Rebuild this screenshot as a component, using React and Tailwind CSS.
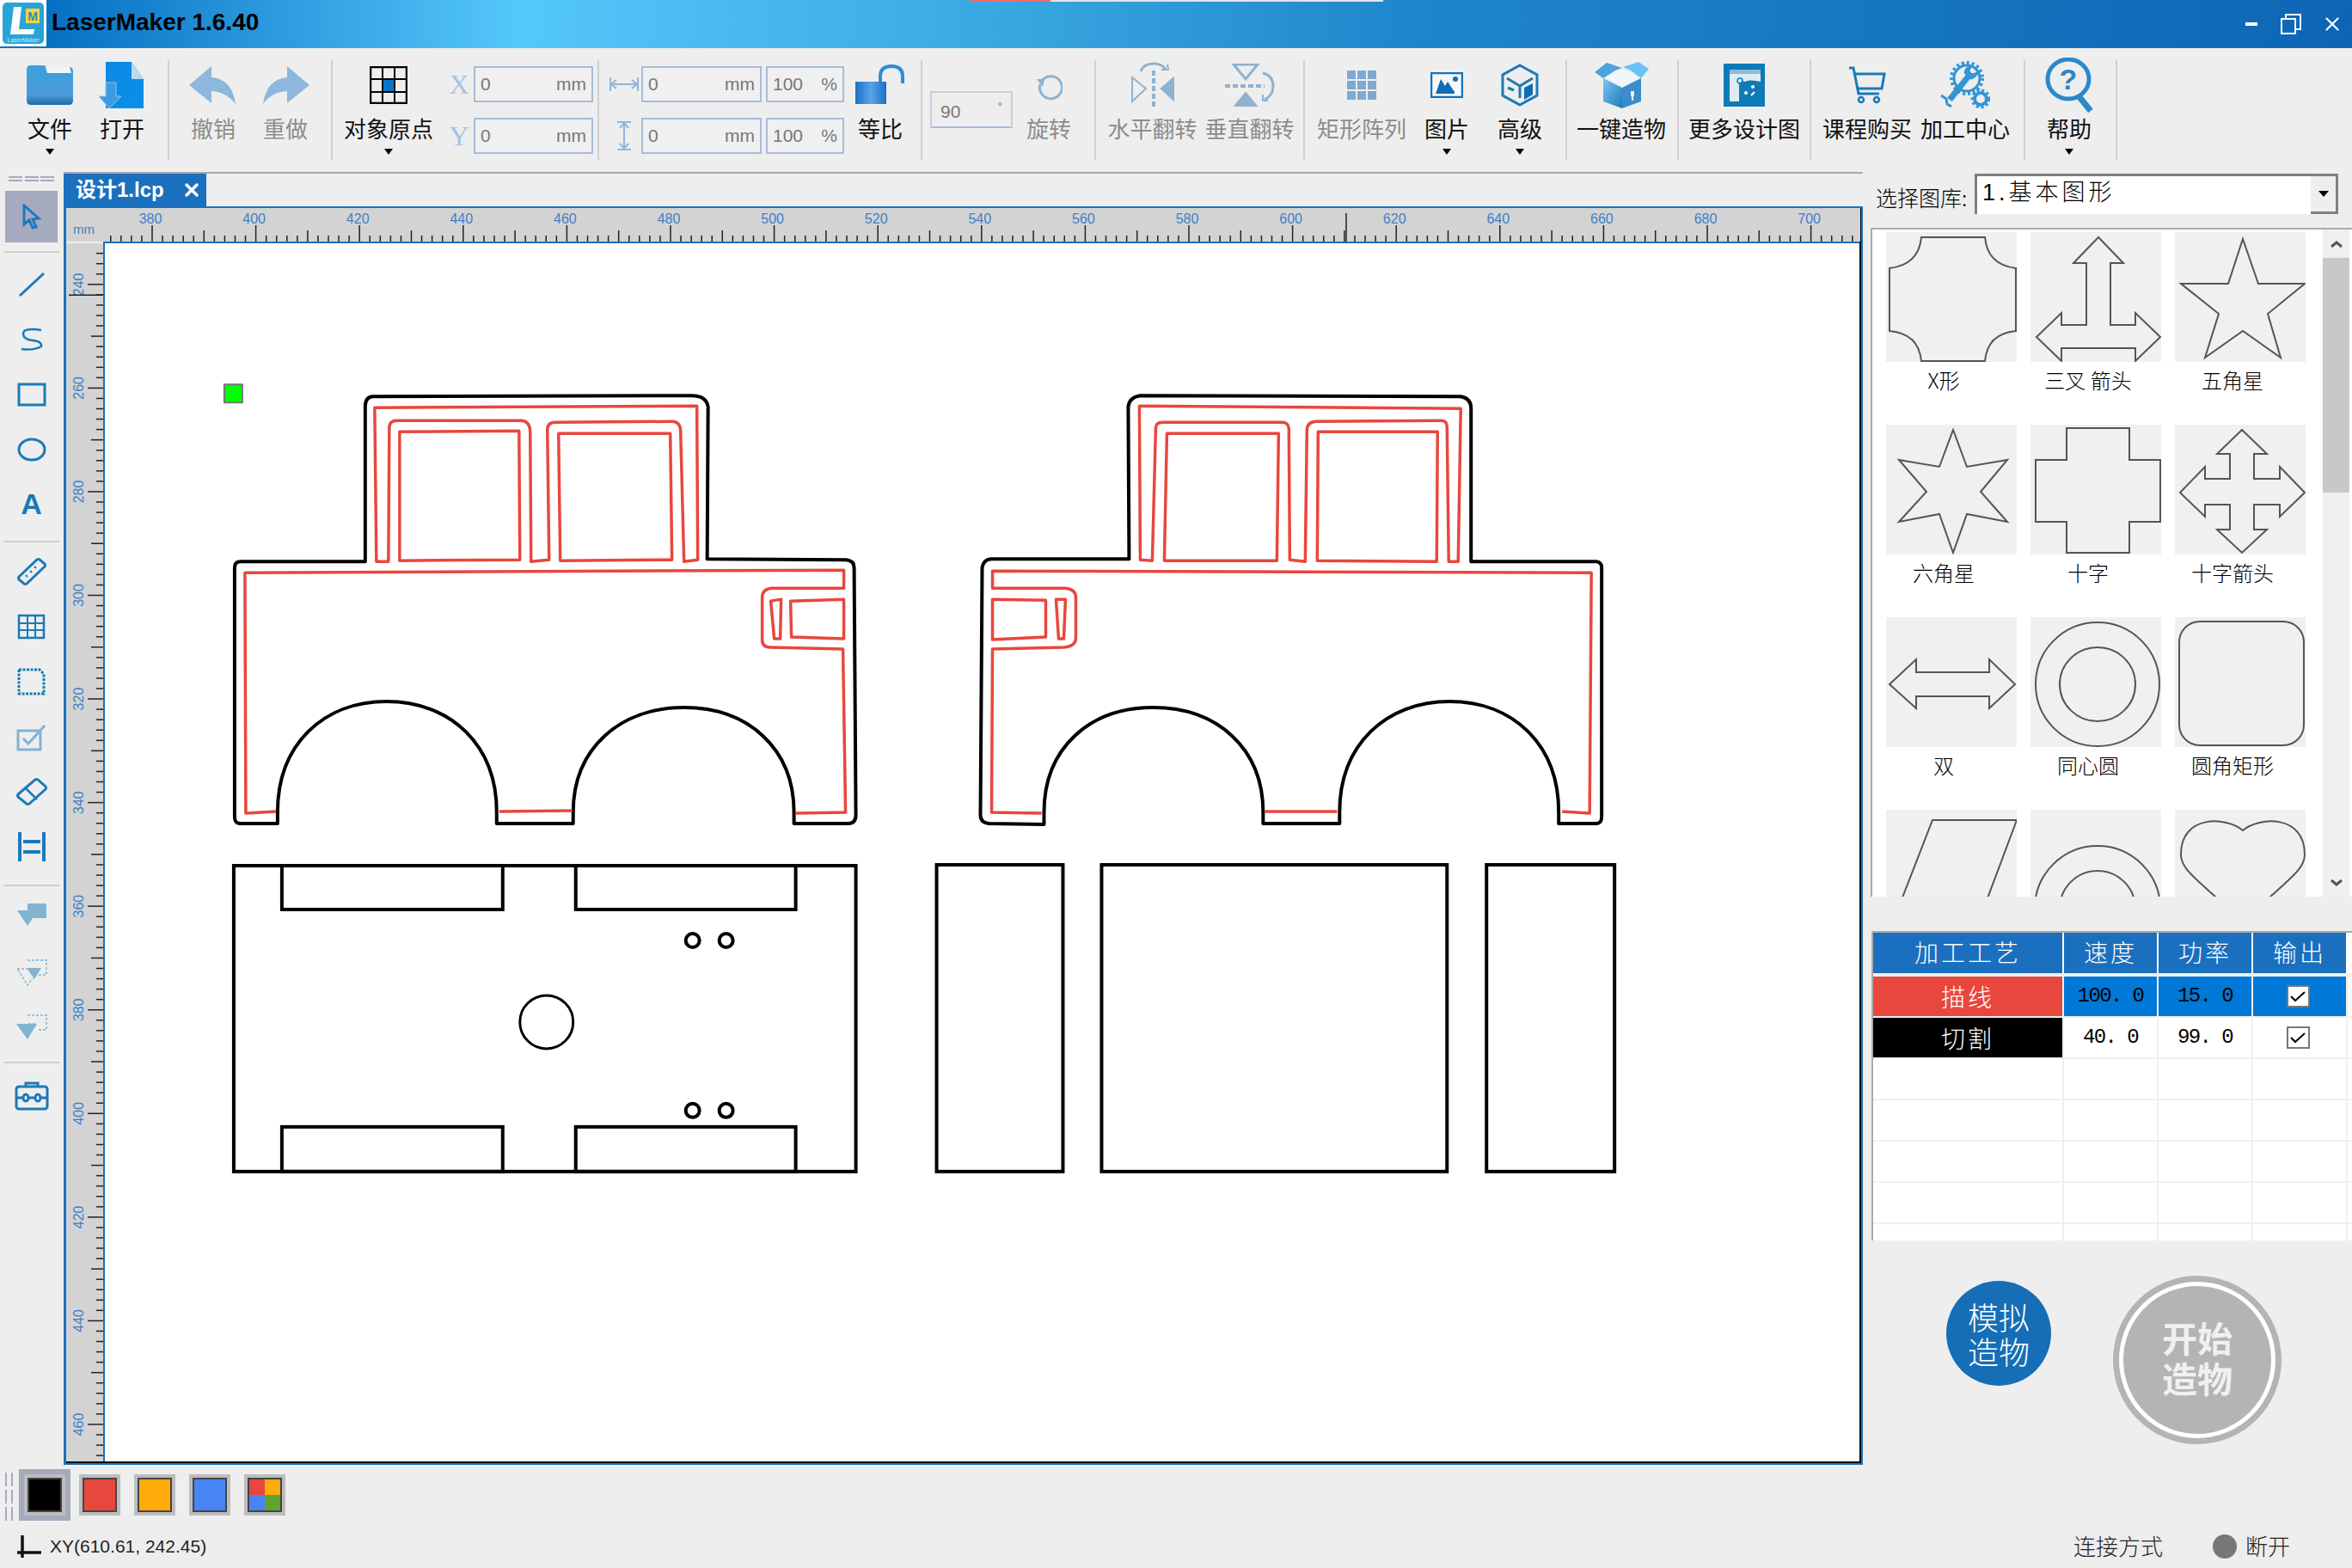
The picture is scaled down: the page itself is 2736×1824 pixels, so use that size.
import { X } from "lucide-react";

const BLUE = "#1a7ab8";
const RULER_BLUE = "#3d80c8";

function Logo() {
    return (
        <div className="w-[54px] h-[54px] bg-white p-[2px]">
            <svg viewBox="0 0 50 50" className="w-[50px] h-[50px]">
                <rect x="1" y="1" width="48" height="48" rx="5" fill="#2aa4d8" />
                <path d="M14 6h9l-3 26h18l-1 6H10z" fill="#fff" />
                <rect x="28" y="8" width="16" height="17" fill="#f3d53f" />
                <text x="36" y="22" fontSize="14" fontWeight="700" textAnchor="middle" fill="#2a8bc0" fontFamily="Liberation Sans">M</text>
                <text x="25" y="47" fontSize="7" textAnchor="middle" fill="#cfeefa" fontFamily="Liberation Sans">LaserMaker</text>
            </svg>
        </div>
    );
}

function TitleBar() {
    return (
        <div className="relative flex items-center h-[56px] bg-[linear-gradient(90deg,#0670c3_2%,#54c7fb_22%,#3eaee6_39%,#1f86cb_60%,#0d66b5_100%)]">
            <div className="self-start"><Logo /></div>
            <div className="ml-[6px] pb-[4px] text-[28px] font-bold text-black font-['Liberation_Sans',sans-serif]">LaserMaker 1.6.40</div>
            <div className="absolute left-[1127px] top-0 flex h-[2px]">
                <div className="w-[95px] bg-[#f06a6a]" />
                <div className="w-[387px] bg-[#e4e4e4]" />
            </div>
            <div className="ml-auto flex items-center text-white">
                <div className="w-[14px] h-[4px] bg-white mr-[26px]" />
                <svg viewBox="0 0 26 26" className="w-[26px] h-[26px] mr-[22px]" fill="none" stroke="#fff" strokeWidth="2">
                    <rect x="2" y="7" width="16" height="17" />
                    <path d="M7 7V2h17v17h-6" />
                </svg>
                <X size={26} strokeWidth={2} className="mr-[10px]" />
            </div>
        </div>
    );
}

function Sep({ className = "" }) {
    return <div className={`w-[2px] h-[116px] mt-[14px] bg-[#d0d0d0] shrink-0 ${className}`} />;
}

function Tool({ label, w, icon, arrow, muted }) {
    return (
        <div style={{ width: w }} className="shrink-0 flex flex-col items-center pt-[16px]">
            <div className="h-[54px] flex items-center justify-center">{icon}</div>
            <div className={`mt-[8px] h-[30px] leading-[30px] whitespace-nowrap text-[26px] ${muted ? "text-[#8c8c8c]" : "text-[#111]"}`}>{label}</div>
            {arrow && <div className="mt-[9px] w-0 h-0 border-x-[5px] border-x-transparent border-t-[7px] border-t-black" />}
        </div>
    );
}

function Field({ value, unit, w }) {
    return (
        <div style={{ width: w }} className="h-[42px] flex items-center justify-between px-[6px] border-2 border-[#a8bcd8] bg-[#f0f0f0] text-[21px] text-[#777] font-['Liberation_Sans',sans-serif]">
            <span>{value}</span><span>{unit}</span>
        </div>
    );
}

function Defs() {
    return (
        <svg width="0" height="0" className="absolute">
            <defs>
                <linearGradient id="gFolder" x1="0" y1="0" x2="0" y2="1">
                    <stop offset="0" stopColor="#3d9fe0" /><stop offset="0.75" stopColor="#4a9ad6" /><stop offset="1" stopColor="#1e6da8" />
                </linearGradient>
                <linearGradient id="gDoc" x1="0" y1="0" x2="0" y2="1">
                    <stop offset="0" stopColor="#0a8ae6" /><stop offset="1" stopColor="#0a8fe8" />
                </linearGradient>
                <linearGradient id="gLock" x1="0" y1="0" x2="1" y2="0">
                    <stop offset="0" stopColor="#1c70c8" /><stop offset="0.5" stopColor="#5aa3e6" /><stop offset="1" stopColor="#1c70c8" />
                </linearGradient>
                <linearGradient id="gBox" x1="0" y1="0" x2="1" y2="1">
                    <stop offset="0" stopColor="#7cc8f2" /><stop offset="1" stopColor="#1f79b8" />
                </linearGradient>
            </defs>
        </svg>
    );
}

const IconFolder = () => (
    <svg viewBox="0 0 56 48" className="w-[56px] h-[48px]">
        <path d="M1 6q0-5 5-5h14q3 0 4 2h26q5 0 5 5v34q0 5-5 5H6q-5 0-5-5z" fill="url(#gFolder)" />
        <path d="M23 3h28l2 7H25z" fill="#eef4f8" />
    </svg>
);
const IconOpen = () => (
    <svg viewBox="0 0 54 54" className="w-[54px] h-[54px]">
        <path d="M8 0h30l14 20v34H8z" fill="url(#gDoc)" />
        <path d="M38 0l14 20H38z" fill="#bcd9ef" />
        <path d="M8 24h12v16h6L12 54 0 40h8z" fill="#3f9be0" stroke="#8cc4ec" strokeWidth="1" />
    </svg>
);
const IconUndo = () => (
    <svg viewBox="0 0 56 44" className="w-[56px] h-[44px]">
        <path d="M0 22L26 0v13q24 2 28 31Q44 30 26 29v14z" fill="#8db7dc" />
    </svg>
);
const IconRedo = () => (
    <svg viewBox="0 0 56 44" className="w-[56px] h-[44px]">
        <path d="M56 22L30 0v13Q6 15 2 44q10-14 28-15v14z" fill="#8db7dc" />
    </svg>
);
const IconOrigin = () => (
    <svg viewBox="0 0 44 44" className="w-[44px] h-[44px]" fill="none" stroke="#000" strokeWidth="2">
        <rect x="16" y="16" width="12" height="14" fill="#0b76c9" stroke="none" />
        <rect x="1" y="1" width="42" height="42" strokeWidth="2.5" />
        <path d="M15 1v42M29 1v42M1 15h42M1 30h42" />
    </svg>
);
const IconLock = () => (
    <svg viewBox="0 0 58 48" className="w-[58px] h-[48px]">
        <path d="M29 22v-8q0-12 13-12t13 12v8" fill="none" stroke="#2a8ddc" strokeWidth="4" />
        <rect x="0" y="20" width="36" height="26" fill="url(#gLock)" />
    </svg>
);
const IconRotate = () => (
    <svg viewBox="0 0 32 32" className="w-[32px] h-[32px] mt-[8px]" fill="none" stroke="#8db3d3" strokeWidth="3">
        <path d="M8 7a13 13 0 1 1-2 4" />
        <path d="M2 5l9 0-2 9z" fill="#8db3d3" stroke="none" />
    </svg>
);
const IconFlipH = () => (
    <svg viewBox="0 0 50 54" className="w-[50px] h-[54px]" fill="none" stroke="#8fb2d0">
        <path d="M26 10v44" strokeWidth="4" strokeDasharray="6 3" />
        <path d="M1 18l16 13L1 46z" strokeWidth="2" />
        <path d="M50 17L34 31l16 15z" fill="#8fb2d0" strokeWidth="1" />
        <path d="M11 11Q14 2 26 2Q36 2 40 9" strokeWidth="3" />
        <path d="M35 9h8l-1-6" strokeWidth="2" />
    </svg>
);
const IconFlipV = () => (
    <svg viewBox="0 0 58 50" className="w-[58px] h-[50px]" fill="none" stroke="#8fb2d0">
        <path d="M0 26h46" strokeWidth="4" strokeDasharray="6 3" />
        <path d="M10 1h28L24 18z" strokeWidth="3" />
        <path d="M10 50h28L24 33z" fill="#8fb2d0" strokeWidth="1" />
        <path d="M44 11Q56 14 56 26Q56 37 46 42" strokeWidth="3" />
        <path d="M44 36v7h6" strokeWidth="2" />
    </svg>
);
const IconArray = () => (
    <svg viewBox="0 0 34 34" className="w-[34px] h-[34px]" fill="#7da9d2">
        {[0, 12, 24].map((y) =>
            [0, 12, 24].map((x) => <rect key={`${x}-${y}`} x={x} y={y} width="10" height="10" />)
        )}
    </svg>
);
const IconImage = () => (
    <svg viewBox="0 0 38 30" className="w-[38px] h-[30px]">
        <rect x="1" y="1" width="36" height="28" fill="#f4f8fb" stroke="#1272bb" strokeWidth="2.5" />
        <path d="M6 25l6-17 5 8 3-5 8 12v2z" fill="#0f6db3" />
        <circle cx="29" cy="8" r="3" fill="#0f6db3" />
    </svg>
);
const IconCube = () => (
    <svg viewBox="0 0 46 50" className="w-[46px] h-[50px]" fill="none" stroke="#1a7ab8" strokeWidth="3">
        <path d="M23 2l20 11v24L23 48 3 37V13z" />
        <path d="M8 17l15 9 15-9M23 26v14M9 28l7 3" />
        <path d="M28 28l10-5v13l-10 6z" fill="#0f6db3" stroke="none" />
    </svg>
);
const IconBox = () => (
    <svg viewBox="0 0 63 54" className="w-[63px] h-[54px]">
        <path d="M13 18l19-10 19 10-19 12z" fill="#f1f6fa" />
        <path d="M10 19l22 11v24L10 46z" fill="url(#gBox)" />
        <path d="M54 19L32 30v24l22-8z" fill="#3b8ccb" />
        <path d="M10 19L0 12 14 1l18 6-8 3z" fill="#4aa5df" />
        <path d="M54 19l9-11L51 0 33 6l9 4z" fill="#6bc2f6" />
        <path d="M42 34h4v5l-1 2v4h-2v-4l-1-2z" fill="#e8f4fb" />
    </svg>
);
const IconDesign = () => (
    <svg viewBox="0 0 48 50" className="w-[48px] h-[50px]">
        <rect width="48" height="50" fill="#0e7ab8" />
        <rect x="7" y="7" width="36" height="37" fill="#dfeaf2" />
        <rect x="7" y="7" width="36" height="5" fill="#8fbcd6" />
        <path d="M18 24q2-5 7-3 5-3 18 0v29H18z" fill="#0e7ab8" />
        <circle cx="19" cy="20" r="3" fill="none" stroke="#0e7ab8" strokeWidth="1.5" />
        <circle cx="26" cy="34" r="2" fill="#fff" />
        <circle cx="34" cy="27" r="2" fill="#fff" />
        <path d="M32 37l4-4" stroke="#fff" strokeWidth="2" />
    </svg>
);
const IconCart = () => (
    <svg viewBox="0 0 44 44" className="w-[44px] h-[44px]" fill="none" stroke="#1a7ab8" strokeWidth="3">
        <path d="M1 2h5l6 30h24" />
        <path d="M8 9h34l-3 17H11" />
        <circle cx="15" cy="39" r="3" strokeWidth="2.5" /><circle cx="33" cy="39" r="3" strokeWidth="2.5" />
    </svg>
);
const IconGear = () => (
    <svg viewBox="0 0 58 58" className="w-[58px] h-[58px]" fill="none" stroke="#3494d6">
        <circle cx="31" cy="21" r="15" strokeWidth="3" />
        <circle cx="31" cy="21" r="18" strokeWidth="4" strokeDasharray="3 3" />
        <path d="M35 16L11 46" strokeWidth="7" />
        <path d="M36 7q-7 0-8 8l8 7q7-2 8-8l-7 2-3-3z" fill="#3494d6" strokeWidth="1" />
        <path d="M1 41l6 4 1 6 5 3" strokeWidth="3" />
        <circle cx="47" cy="45" r="7" strokeWidth="4" />
        <circle cx="47" cy="45" r="10" strokeWidth="3" strokeDasharray="3 3" />
    </svg>
);
const IconHelp = () => (
    <svg viewBox="0 0 56 64" className="w-[56px] h-[64px]" fill="none" stroke="#2b88c9" strokeWidth="5">
        <ellipse cx="27" cy="25" rx="24" ry="23" />
        <path d="M40 46l13 16" strokeWidth="7" />
        <text x="27" y="37" fontSize="34" fontWeight="700" textAnchor="middle" fill="#2b88c9" stroke="none" fontFamily="Liberation Sans">?</text>
    </svg>
);

function Toolbar() {
    return (
        <div className="flex h-[144px] pl-[16px] bg-[#eeeeee]">
            <Tool w={84} label="文件" icon={<IconFolder />} arrow />
            <Tool w={84} label="打开" icon={<IconOpen />} />
            <Sep className="ml-[11px]" />
            <div className="w-[9px] shrink-0" />
            <Tool w={84} label="撤销" icon={<IconUndo />} muted />
            <Tool w={84} label="重做" icon={<IconRedo />} muted />
            <Sep className="ml-[11px]" />
            <Tool w={130} label="对象原点" icon={<IconOrigin />} arrow />
            <div className="w-[173px] shrink-0 pt-[21px] flex flex-col gap-[18px]">
                {["X", "Y"].map((a) => (
                    <div key={a} className="h-[42px] flex items-center">
                        <div className="w-[34px] text-center text-[32px] leading-none text-[#a5c3e3] font-['Liberation_Serif',serif]">{a}</div>
                        <Field w={139} value="0" unit="mm" />
                    </div>
                ))}
            </div>
            <Sep className="ml-[5px]" />
            <div className="w-[285px] shrink-0 pt-[21px] flex flex-col gap-[18px]">
                {[0, 1].map((i) => (
                    <div key={i} className="flex items-center">
                        <div className="w-[49px] flex justify-center">
                            {i === 0 ? (
                                <svg viewBox="0 0 34 20" className="w-[34px] h-[20px] ml-[8px]" fill="none" stroke="#8fb6dc" strokeWidth="2">
                                    <path d="M1 2v16M33 2v16M2 10h30M8 5l-6 5 6 5M26 5l6 5-6 5" />
                                </svg>
                            ) : (
                                <svg viewBox="0 0 20 34" className="w-[20px] h-[34px] ml-[8px]" fill="none" stroke="#8fb6dc" strokeWidth="2">
                                    <path d="M2 1h16M2 33h16M10 2v30M5 8l5-6 5 6M5 26l5 6 5-6" />
                                </svg>
                            )}
                        </div>
                        <Field w={140} value="0" unit="mm" />
                        <div className="ml-[5px]"><Field w={91} value="100" unit="%" /></div>
                    </div>
                ))}
            </div>
            <Tool w={84} label="等比" icon={<IconLock />} />
            <Sep className="ml-[5px]" />
            <div className="ml-[9px] mt-[50px] w-[96px] h-[43px] shrink-0 flex justify-between px-[10px] pt-[6px] border-2 border-[#c4cfe0] border-b-[#a8bcd8] text-[21px] text-[#777] font-['Liberation_Sans',sans-serif]">
                <span>90</span><span className="text-[14px]">°</span>
            </div>
            <Tool w={84} label="旋转" icon={<IconRotate />} muted />
            <Sep className="ml-[11px]" />
            <div className="w-[9px] shrink-0" />
            <Tool w={113} label="水平翻转" icon={<IconFlipH />} muted />
            <Tool w={113} label="垂直翻转" icon={<IconFlipV />} muted />
            <Sep className="ml-[6px]" />
            <Tool w={132} label="矩形阵列" icon={<IconArray />} muted />
            <Tool w={66} label="图片" icon={<IconImage />} arrow />
            <Tool w={104} label="高级" icon={<IconCube />} arrow />
            <Sep className="ml-[1px]" />
            <Tool w={126} label="一键造物" icon={<IconBox />} />
            <Sep className="ml-[2px]" />
            <Tool w={152} label="更多设计图" icon={<IconDesign />} />
            <Sep />
            <Tool w={130} label="课程购买" icon={<IconCart />} />
            <Tool w={98} label="加工中心" icon={<IconGear />} />
            <Sep className="ml-[19px]" />
            <Tool w={102} label="帮助" icon={<IconHelp />} arrow />
            <Sep className="ml-[3px]" />
        </div>
    );
}

const Ico = ({ children, muted }) => (
    <svg viewBox="0 0 36 34" className={`w-[36px] h-[34px] ${muted ? "opacity-50" : ""}`} fill="none" stroke={BLUE} strokeWidth="2.5">
        {children}
    </svg>
);

function SideRow({ children, h = 64 }) {
    return <div style={{ height: h }} className="flex items-center justify-center">{children}</div>;
}

function SideSep() {
    return <div className="h-[2px] mx-[4px] bg-[#cfcfcf]" />;
}

function LeftBar() {
    return (
        <div className="w-[73px] shrink-0 bg-[#eeeeee] pt-[5px]">
            <div className="flex justify-between px-[10px] h-[17px]">
                {[0, 1, 2].map((i) => (
                    <div key={i} className="w-[16px] h-[6px] border-y-2 border-[#a5aabf]" />
                ))}
            </div>
            <div className="mx-[6px] h-[60px] bg-[#a5aabf] flex items-center justify-center">
                <svg viewBox="0 0 24 30" className="w-[24px] h-[30px]" fill="none" stroke={BLUE} strokeWidth="3">
                    <path d="M3 2l17 15-7 1 4 9-4 1-4-9-6 5z" />
                </svg>
            </div>
            <div className="h-[10px]" />
            <SideSep />
            <div className="pt-[5px]">
                <SideRow><Ico><path d="M4 30L32 4" strokeWidth="3" /></Ico></SideRow>
                <SideRow><Ico><path d="M29 6Q8 3 8 10t11 8 10 7Q20 30 6 28" /></Ico></SideRow>
                <SideRow><Ico><rect x="3" y="5" width="30" height="24" strokeWidth="3" /></Ico></SideRow>
                <SideRow><Ico><ellipse cx="18" cy="17" rx="15" ry="12" strokeWidth="3" /></Ico></SideRow>
                <SideRow h={62}><span className="text-[34px] font-bold text-[#1a7ab8] font-['Liberation_Sans',sans-serif]">A</span></SideRow>
            </div>
            <div className="h-[12px]" />
            <SideSep />
            <div className="pt-[2px]">
                <SideRow>
                    <Ico>
                        <path d="M3 23L24 3q2-1 3 0l6 5q1 2 0 3L12 31q-2 1-3 0l-6-5q-1-2 0-3z" strokeWidth="3" />
                        <path d="M11 21l2 2M16 16l2 2M21 11l2 2" strokeWidth="2" />
                    </Ico>
                </SideRow>
                <SideRow><Ico><rect x="3" y="4" width="29" height="26" /><path d="M3 13h29M3 21h29M13 4v26M22 4v26" strokeWidth="2" /></Ico></SideRow>
                <SideRow><Ico><path d="M3 3h24l5 5v23H3z" strokeDasharray="3 1.5" strokeWidth="3" /></Ico></SideRow>
                <SideRow>
                    <Ico muted>
                        <rect x="2" y="10" width="26" height="22" strokeWidth="3" />
                        <path d="M8 19l6 6L33 4" strokeWidth="3" />
                    </Ico>
                </SideRow>
                <SideRow>
                    <Ico>
                        <path d="M2 20L22 3q1-1 3 0l9 8q1 2 0 3L15 31q-2 1-3 0l-10-8q-1-2 0-3z" strokeWidth="3" />
                        <path d="M11 13l13 13" />
                    </Ico>
                </SideRow>
                <SideRow><Ico><path d="M4 0v34M32 0v34" strokeWidth="4" /><path d="M8 11h20M8 23h20" strokeWidth="4" /></Ico></SideRow>
            </div>
            <div className="h-[12px]" />
            <SideSep />
            <div className="pt-[2px]">
                <SideRow h={65}>
                    <Ico muted>
                        <rect x="13" y="2" width="22" height="17" fill={BLUE} stroke="none" />
                        <path d="M1 10h24L13 28z" fill={BLUE} stroke="none" />
                    </Ico>
                </SideRow>
                <SideRow h={65}>
                    <Ico muted>
                        <path d="M12 12h17L21 25z" fill={BLUE} stroke="none" />
                        <path d="M13 3h22v17H26M1 13h11M2 14l11 18 6-8" strokeDasharray="3 2" strokeWidth="1.5" />
                    </Ico>
                </SideRow>
                <SideRow h={65}>
                    <Ico muted>
                        <path d="M0 12h24L13 30z" fill={BLUE} stroke="none" />
                        <path d="M13 2h22v17H24M14 12l10 0" strokeDasharray="3 2" strokeWidth="1.5" />
                    </Ico>
                </SideRow>
            </div>
            <div className="h-[7px]" />
            <SideSep />
            <div className="pt-[6px]">
                <SideRow>
                    <svg viewBox="0 0 40 34" className="w-[40px] h-[34px]" fill="none" stroke={BLUE} strokeWidth="3">
                        <rect x="2" y="6" width="36" height="26" rx="3" />
                        <path d="M13 6V2h14v4M2 19h36" />
                        <ellipse cx="13" cy="19" rx="3" ry="4" fill="#eeeeee" />
                        <ellipse cx="27" cy="19" rx="3" ry="4" fill="#eeeeee" />
                    </svg>
                </SideRow>
            </div>
        </div>
    );
}

function TopRuler() {
    const ticks = [];
    for (let v = 372; v <= 720; v += 2) {
        const x = 177 + (v - 380) * 6.03;
        if (x < 124 || x > 2162) continue;
        const top = v % 20 === 0 ? 262 : v % 10 === 0 ? 268 : 274;
        ticks.push(<path key={v} d={`M${x} ${top}V281`} stroke="#222" strokeWidth="1.5" />);
        if (v % 20 === 0) {
            ticks.push(
                <text key={`t${v}`} x={x - 2} y={260} fontSize="16" textAnchor="middle" fill={RULER_BLUE} fontFamily="Liberation Sans">{v}</text>
            );
        }
    }
    return (
        <svg viewBox="77 242 2087 39" className="block w-[2087px] h-[39px] bg-[#d3d3d3]">
            <text x="85" y="272" fontSize="15" fill={RULER_BLUE} fontFamily="Liberation Sans">mm</text>
            {ticks}
            <path d="M1566 248V281" stroke="#222" strokeWidth="1.5" />
        </svg>
    );
}

function LeftRuler() {
    const ticks = [];
    for (let v = 232; v <= 470; v += 2) {
        const y = 330.6 + (v - 240) * 6.03;
        if (y < 285 || y > 1698) continue;
        const left = v % 20 === 0 ? 102 : v % 10 === 0 ? 106 : 112;
        ticks.push(<path key={v} d={`M${left} ${y}H120`} stroke="#222" strokeWidth="1.5" />);
        if (v % 20 === 0) {
            ticks.push(
                <text key={`t${v}`} transform={`translate(97 ${y}) rotate(-90)`} fontSize="16" textAnchor="middle" fill={RULER_BLUE} fontFamily="Liberation Sans">{v}</text>
            );
        }
    }
    return (
        <svg viewBox="77 283 43 1417" className="block w-[43px] h-[1417px] bg-[#d3d3d3]">
            {ticks}
            <path d="M80 343H120" stroke="#222" strokeWidth="1.5" />
        </svg>
    );
}

function Canvas() {
    const black = { fill: "none", stroke: "#000", strokeWidth: 4, strokeLinejoin: "round" };
    const red = { fill: "none", stroke: "#e8473d", strokeWidth: 3.5, strokeLinejoin: "round" };
    return (
        <svg viewBox="122 283 2042 1417" className="block w-[2042px] h-[1417px] bg-white">
            <rect x="261" y="447" width="21" height="21" fill="#00ff00" stroke="#777" strokeWidth="2" />

            {/* left truck */}
            <path {...black} d="M425 473Q425 462 433 461L805 460Q822 460 824 473L823 650L985 651Q994 652 994 660L996 948Q996 958 987 958H924V945C924 870 870 823 796 823C722 823 667 870 667 945V958H578V945C578 866 524 816 450 816C376 816 323 866 323 945V958H279Q273 958 273 950V660Q273 653 280 653H425Z" />
            <path {...red} d="M321 944L286 946L285 666L982 663V684H898Q887 685 887 695V744Q887 753 896 753L981 755L984 945L926 946" />
            <path {...red} d="M581 944L666 943" />
            <path {...red} d="M438 653L436 474L811 472L812 651L796 653L792 500Q791 490 782 490L646 491Q637 491 637 500L639 651L618 653L617 501Q616 489 606 489H462Q453 489 453 497L452 653Z" />
            <path {...red} d="M465 502L604 501L605 651L465 652Z" />
            <path {...red} d="M650 504H780L782 651L652 652Z" />
            <path {...red} d="M897 699L909 697L908 743H901Z" />
            <path {...red} d="M920 699L982 697V743L921 741Z" />

            {/* right truck */}
            <path {...black} d="M1313 473Q1314 462 1327 460L1700 461Q1712 463 1712 475V653H1858Q1864 654 1864 660V950Q1864 958 1858 958H1814V945C1814 866 1761 816 1687 816C1613 816 1559 866 1559 945V958H1470V945C1470 870 1416 823 1342 823C1268 823 1215 870 1215 945V959L1151 958Q1141 957 1141 948L1143 660Q1145 650 1154 650H1314Z" />
            <path {...red} d="M1212 946L1154 945L1155 755L1238 753Q1252 752 1252 742V695Q1252 685 1240 684H1155V664L1852 666L1850 946L1818 944" />
            <path {...red} d="M1472 944H1556" />
            <path {...red} d="M1326 472L1700 475L1697 653H1686L1684 496Q1684 489 1677 489L1531 490Q1521 491 1521 500L1519 653L1501 651L1500 498Q1499 491 1492 491H1353Q1345 491 1345 498L1341 652L1327 651Z" />
            <path {...red} d="M1358 504H1488L1486 652H1355Z" />
            <path {...red} d="M1534 502H1673L1672 653L1533 652Z" />
            <path {...red} d="M1155 697L1217 698V741L1155 744Z" />
            <path {...red} d="M1229 697H1240L1238 743H1232Z" />

            {/* base plate */}
            <g fill="none" stroke="#000" strokeWidth="4">
                <rect x="272" y="1007" width="724" height="356" />
                <rect x="328" y="1007" width="257" height="51" />
                <rect x="670" y="1007" width="256" height="51" />
                <rect x="328" y="1311" width="257" height="52" />
                <rect x="670" y="1311" width="256" height="52" />
                <circle cx="636" cy="1189" r="31" strokeWidth="3" />
                <circle cx="806" cy="1094" r="8" />
                <circle cx="845" cy="1094" r="8" />
                <circle cx="806" cy="1292" r="8" />
                <circle cx="845" cy="1292" r="8" />
                <rect x="1090" y="1006" width="147" height="357" />
                <rect x="1282" y="1006" width="402" height="357" />
                <rect x="1730" y="1006" width="149" height="357" />
            </g>
        </svg>
    );
}

function Center() {
    return (
        <div className="w-[2094px] shrink-0 flex flex-col bg-[#eeeeee]">
            <div className="h-[2px] bg-[#aaaaaa] ml-[1px]" />
            <div className="h-[38px] flex">
                <div className="ml-[1px] w-[166px] bg-[#1a70be] flex items-center text-white pl-[14px] text-[24px] font-bold font-['Liberation_Sans','Noto_Sans_CJK_SC',sans-serif]">
                    <span>设计1.lcp</span>
                    <X size={24} strokeWidth={3.5} className="ml-[20px]" />
                </div>
            </div>
            <div className="border-t-2 border-l-[3px] border-r-2 border-b-2 border-[#1a70be] ml-[1px]">
                <div className="border-r-2 border-b-2 border-black">
                    <TopRuler />
                    <div className="h-[2px] bg-[#1a70be] ml-[43px]" />
                    <div className="flex">
                        <LeftRuler />
                        <div className="w-[2px] bg-[#1a70be]" />
                        <Canvas />
                    </div>
                </div>
            </div>
        </div>
    );
}

const SHAPE = { fill: "none", stroke: "#555", strokeWidth: 2 };

const shapes = [
    { label: "X形", el: <path {...SHAPE} d="M41 6H115Q118 38 151 42V115Q118 118 115 150H41Q38 118 4 115V42Q38 38 41 6Z" /> },
    { label: "三叉 箭头", el: <polygon {...SHAPE} points="79,6 108,36 93,36 93,108 122,108 122,94 151,122 122,150 122,135 36,135 36,150 7,122 36,94 36,108 65,108 65,36 50,36" /> },
    { label: "五角星", el: <polygon {...SHAPE} points="79,8 97,60 151,60 108,95 123,146 79,115 35,146 51,95 7,60 62,60" /> },
    { label: "六角星", el: <polygon {...SHAPE} points="78,6 94,49 141,41 110,78 141,113 94,104 78,149 62,104 15,113 47,78 15,41 62,49" /> },
    { label: "十字", el: <polygon {...SHAPE} points="42,4 115,4 115,41 151,41 151,113 115,113 115,149 42,149 42,113 6,113 6,41 42,41" /> },
    { label: "十字箭头", el: <polygon {...SHAPE} points="78,6 107,34 92,34 92,63 122,63 122,49 151,79 122,107 122,93 92,93 92,122 107,122 78,149 49,122 64,122 64,93 35,93 35,107 6,79 35,49 35,63 64,63 64,34 49,34" /> },
    { label: "双", el: <polygon {...SHAPE} points="4,78 35,49 35,64 120,64 120,49 150,78 120,106 120,92 35,92 35,106" /> },
    { label: "同心圆", el: <g {...SHAPE}><ellipse cx="78" cy="78" rx="72" ry="72" /><ellipse cx="78" cy="78" rx="44" ry="43" /></g> },
    { label: "圆角矩形", el: <rect {...SHAPE} x="5" y="5" width="145" height="144" rx="24" /> },
    { label: "", el: <polygon {...SHAPE} points="54,12 152,12 100,151 0,151" /> },
    { label: "", el: <g {...SHAPE}><circle cx="78" cy="115" r="73" /><circle cx="78" cy="115" r="44" /></g> },
    { label: "", el: <path {...SHAPE} d="M79 24C60 8 7 5 7 52C7 70 25 80 79 130C133 80 151 70 151 52C151 5 98 8 79 24Z" /> },
];

function Gallery() {
    return (
        <div className="ml-[9px] h-[778px] flex border-l-2 border-t-2 border-[#aaaaaa] bg-white overflow-hidden">
            <div className="w-[524px] shrink-0 pl-[16px] pt-[3px] grid grid-cols-[152px_152px_152px] gap-x-[16px] content-start">
                {shapes.map((s, i) => (
                    <div key={i} className="h-[224px]">
                        <svg viewBox="0 0 152 151" className="block w-[152px] h-[151px] bg-[#f0f0f0]">{s.el}</svg>
                        <div className="pr-[18px] h-[42px] leading-[42px] text-center text-[24px] font-light whitespace-nowrap text-black">{s.label}</div>
                    </div>
                ))}
            </div>
            <div className="w-[31px] shrink-0 flex flex-col bg-[#f0f0f0]">
                <div className="h-[33px] flex items-center justify-center">
                    <svg viewBox="0 0 16 10" className="w-[16px] h-[10px]" fill="none" stroke="#555" strokeWidth="3"><path d="M2 8l6-5 6 5" /></svg>
                </div>
                <div className="h-[273px] bg-[#c8c8c8]" />
                <div className="flex-1" />
                <div className="h-[33px] flex items-center justify-center">
                    <svg viewBox="0 0 16 10" className="w-[16px] h-[10px]" fill="none" stroke="#555" strokeWidth="3"><path d="M2 2l6 5 6-5" /></svg>
                </div>
            </div>
        </div>
    );
}

function Check() {
    return (
        <div className="w-[27px] h-[26px] mr-[4px] bg-white border-2 border-[#777] flex items-center justify-center">
            <svg viewBox="0 0 18 14" className="w-[18px] h-[14px]" fill="none" stroke="#000" strokeWidth="2"><path d="M1 7l5 5L17 2" /></svg>
        </div>
    );
}

const ROW = "grid grid-cols-[220px_108px_108px_108px_1fr] gap-x-[2px] h-[46px] mb-[2px]";
const NUM = "font-['Liberation_Mono',monospace] text-[24px] tracking-[-1.6px] text-black flex items-center justify-center";
const NAME = "text-white text-[28px] tracking-[3px] font-light flex items-center justify-center";

function ProcessTable() {
    return (
        <div className="ml-[10px] mt-[40px] h-[360px] overflow-hidden border-l-2 border-t-2 border-[#aaaaaa] bg-[#f0f0f0]">
            <div className={`${ROW} !h-[47px] !mb-[4px] bg-white`}>
                {["加工工艺", "速度", "功率", "输出"].map((h) => (
                    <div key={h} className="bg-[#1a70be] text-white text-[28px] font-light tracking-[3px] pb-[4px] flex items-center justify-center">{h}</div>
                ))}
                <div />
            </div>
            <div className={ROW}>
                <div className={`bg-[#e8473d] ${NAME}`}>描线</div>
                <div className={`${NUM} bg-[#0078d7]`}>100. 0</div>
                <div className={`${NUM} bg-[#0078d7]`}>15. 0</div>
                <div className="bg-[#0078d7] flex items-center justify-center"><Check /></div>
                <div className="bg-white" />
            </div>
            <div className={ROW}>
                <div className={`bg-black ${NAME}`}>切割</div>
                <div className={`${NUM} bg-white`}>40. 0</div>
                <div className={`${NUM} bg-white`}>99. 0</div>
                <div className="bg-white flex items-center justify-center"><Check /></div>
                <div className="bg-white" />
            </div>
            {[0, 1, 2, 3, 4].map((i) => (
                <div key={i} className={ROW}>
                    {[0, 1, 2, 3, 4].map((c) => <div key={c} className="bg-white" />)}
                </div>
            ))}
        </div>
    );
}

function RightPanel() {
    return (
        <div className="flex-1 bg-[#eeeeee]">
            <div className="h-[65px] flex items-start pl-[15px]">
                <div className="w-[115px] pt-[11px] text-[25px] font-light whitespace-nowrap text-black">选择图库:</div>
                <div className="mt-[2px] w-[423px] h-[47px] flex bg-white border-l-[3px] border-t-[3px] border-[#808080]">
                    <div className="flex-1 pl-[6px] text-[27px] tracking-[4px] leading-[38px] font-light text-black font-['Liberation_Sans','Noto_Sans_CJK_SC',sans-serif]">1.基本图形</div>
                    <div className="w-[32px] bg-[#eeeeee] border-b-[3px] border-r-[3px] border-[#808080] flex items-center justify-center">
                        <div className="w-0 h-0 border-x-[6px] border-x-transparent border-t-[7px] border-t-black" />
                    </div>
                </div>
            </div>
            <Gallery />
            <ProcessTable />
            <div className="flex items-start pl-[97px] pt-[41px]">
                <div className="w-[122px] h-[122px] mt-[6px] rounded-full bg-[#166eb6] flex items-center justify-center text-center text-white text-[36px] leading-[40px] font-light">
                    模拟<br />造物
                </div>
                <div className="ml-[72px] w-[196px] h-[196px] rounded-full bg-[#b3b4b3] p-[7px]">
                    <div className="w-full h-full rounded-full border-[5px] border-white pb-[6px] flex items-center justify-center text-center text-[#f0f0f0] text-[41px] leading-[47px] font-bold">
                        开始<br />造物
                    </div>
                </div>
            </div>
        </div>
    );
}

function Swatch({ color, multi }) {
    return (
        <div className="w-[48px] h-[48px] bg-[#bdbdbd] p-[4px]">
            <div className="w-full h-full border-2 border-[#444]" style={multi ? undefined : { background: color }}>
                {multi && (
                    <div className="w-full h-full grid grid-cols-2 grid-rows-2">
                        <div className="bg-[#e8473d]" /><div className="bg-[#ffab0c]" />
                        <div className="bg-[#4785f4]" /><div className="bg-[#5fa52d]" />
                    </div>
                )}
            </div>
        </div>
    );
}

function ColorBar() {
    return (
        <div className="h-[76px] flex items-start pl-[6px] pt-[5px] bg-[#eeeeee]">
            <div className="w-[9px] h-[60px] pt-[4px] flex flex-col justify-between">
                {[0, 1, 2].map((i) => (
                    <div key={i} className="h-[16px] border-x-2 border-[#a5aabf]" />
                ))}
            </div>
            <div className="ml-[7px] w-[60px] h-[60px] bg-[#a5aabf] p-[6px]">
                <Swatch color="#000" />
            </div>
            <div className="ml-[10px] mt-[6px] flex gap-[16px]">
                <Swatch color="#e8473d" />
                <Swatch color="#ffab0c" />
                <Swatch color="#4785f4" />
                <Swatch multi />
            </div>
        </div>
    );
}

function StatusBar() {
    return (
        <div className="h-[44px] flex items-center bg-[#ededed] pl-[20px] pr-[72px] pb-[6px]">
            <svg viewBox="0 0 28 28" className="w-[28px] h-[28px]" fill="none" stroke="#111" strokeWidth="3.5">
                <path d="M6 1V27M0 21H28" />
            </svg>
            <div className="ml-[10px] text-[21px] text-[#222] font-['Liberation_Sans',sans-serif]">XY(610.61, 242.45)</div>
            <div className="ml-auto -mt-[3px] text-[26px] text-[#222] font-light">连接方式</div>
            <div className="ml-[58px] w-[28px] h-[28px] rounded-full bg-[#777777]" />
            <div className="ml-[10px] -mt-[3px] text-[26px] text-[#222] font-light">断开</div>
        </div>
    );
}

export default function App() {
    return (
        <div className="w-[2736px] h-[1824px] overflow-hidden bg-[#eeeeee] font-['Noto_Sans_CJK_SC',sans-serif]">
            <Defs />
            <TitleBar />
            <Toolbar />
            <div className="flex h-[1504px]">
                <LeftBar />
                <Center />
                <RightPanel />
            </div>
            <ColorBar />
            <StatusBar />
        </div>
    );
}
